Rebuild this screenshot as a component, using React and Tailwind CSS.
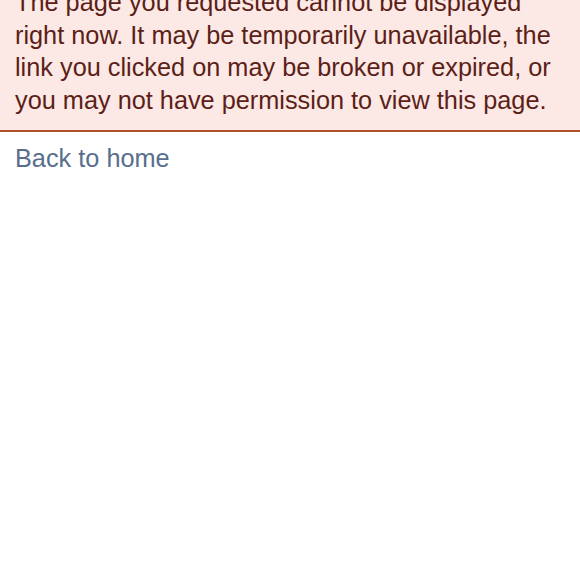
export default function App() {
  return (
    <div className="w-[580px] h-[580px] overflow-hidden bg-white" style={{ fontFamily: '"Liberation Sans", Arial, sans-serif' }}>
      <div className="-mt-[14px] bg-[#fce8e5] border-b-2 border-[#b0502c] px-[15px] pt-0 pb-[14px] text-[#5b1f17] text-[25.3px] leading-[32.5px]">
        The page you requested cannot be displayed right now. It may be temporarily unavailable, the link you clicked on may be broken or expired, or you may not have permission to view this page.
      </div>
      <div className="px-[15px] pt-[10px]">
        <a className="text-[#586e8c] text-[25.3px] leading-[32px]">Back to home</a>
      </div>
    </div>
  );
}
